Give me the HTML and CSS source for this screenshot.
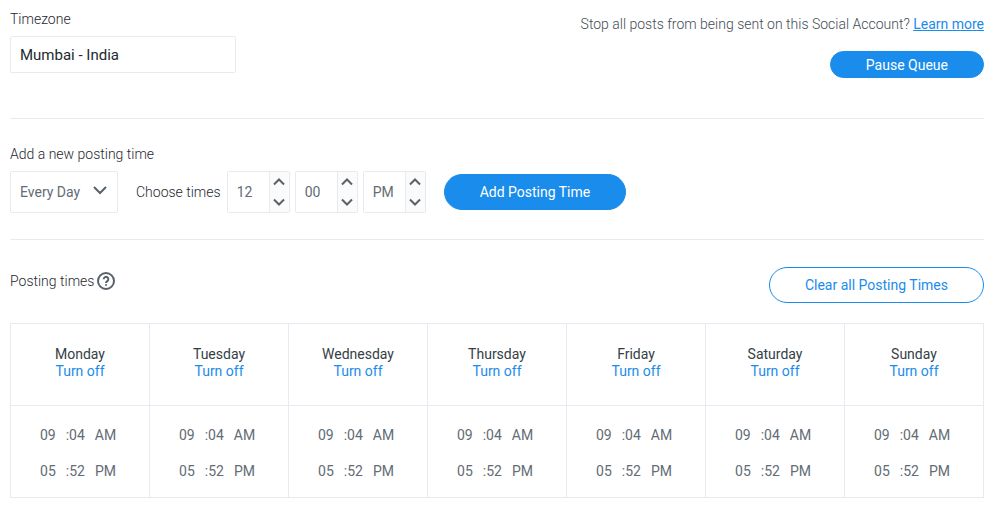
FILE: index.html
```html
<!DOCTYPE html>
<html lang="en">
<head>
    <meta charset="UTF-8">
    <meta name="viewport" content="width=device-width, initial-scale=1.0">
    <title>Posting Schedule</title>
    <link rel="stylesheet" href="styles.css">
</head>
<body>
    <main class="settings">
        <section class="section account">
            <div class="timezone">
                <label class="label" for="timezone">Timezone</label>
                <input type="text" id="timezone" class="timezone-input" value="Mumbai - India">
            </div>
            <div class="pause">
                <p class="pause-text">Stop all posts from being sent on this Social Account? <a href="#">Learn more</a></p>
                <button type="button" class="btn btn-small">Pause Queue</button>
            </div>
        </section>

        <section class="section">
            <label class="label" for="day">Add a new posting time</label>
            <form class="add-form">
                <div class="select-box">
                    <select id="day">
                        <option>Every Day</option>
                        <option>Weekdays</option>
                        <option>Weekends</option>
                    </select>
                    <svg class="select-arrow" width="16" height="10" viewBox="0 0 16 10"><path d="M2 2l6 6 6-6"/></svg>
                </div>
                <div class="choose">
                    <label for="hour">Choose times</label>
                    <div class="spinners">
                        <div class="spinner">
                            <input type="text" id="hour" value="12" data-min="1" data-max="12">
                            <div class="arrows">
                                <button type="button" data-step="1" aria-label="Hour up"><svg width="12" height="8" viewBox="0 0 12 8"><path d="M1 6.5l5-5 5 5"/></svg></button>
                                <button type="button" data-step="-1" aria-label="Hour down"><svg width="12" height="8" viewBox="0 0 12 8"><path d="M1 1.5l5 5 5-5"/></svg></button>
                            </div>
                        </div>
                        <div class="spinner">
                            <input type="text" id="minute" value="00" aria-label="Minute" data-min="0" data-max="59">
                            <div class="arrows">
                                <button type="button" data-step="1" aria-label="Minute up"><svg width="12" height="8" viewBox="0 0 12 8"><path d="M1 6.5l5-5 5 5"/></svg></button>
                                <button type="button" data-step="-1" aria-label="Minute down"><svg width="12" height="8" viewBox="0 0 12 8"><path d="M1 1.5l5 5 5-5"/></svg></button>
                            </div>
                        </div>
                        <div class="spinner">
                            <input type="text" id="period" value="PM" aria-label="AM or PM">
                            <div class="arrows">
                                <button type="button" data-step="1" aria-label="Period up"><svg width="12" height="8" viewBox="0 0 12 8"><path d="M1 6.5l5-5 5 5"/></svg></button>
                                <button type="button" data-step="-1" aria-label="Period down"><svg width="12" height="8" viewBox="0 0 12 8"><path d="M1 1.5l5 5 5-5"/></svg></button>
                            </div>
                        </div>
                    </div>
                </div>
                <button type="button" class="btn">Add Posting Time</button>
            </form>
        </section>

        <section class="section">
            <div class="times-head">
                <h2 class="times-title">Posting times
                    <svg class="help" width="20" height="20" viewBox="0 0 20 20">
                        <circle cx="10" cy="10" r="8"/>
                        <path d="M7.7 8.2a2.3 2.3 0 1 1 3.6 1.9c-.8.6-1.3 1-1.3 1.8"/>
                        <path d="M10 13.3v1.5"/>
                    </svg>
                </h2>
                <button type="button" class="btn btn-outline">Clear all Posting Times</button>
            </div>
            <table class="schedule">
                <thead>
                    <tr>
                        <th scope="col">Monday<button type="button" class="turn-off">Turn off</button></th>
                        <th scope="col">Tuesday<button type="button" class="turn-off">Turn off</button></th>
                        <th scope="col">Wednesday<button type="button" class="turn-off">Turn off</button></th>
                        <th scope="col">Thursday<button type="button" class="turn-off">Turn off</button></th>
                        <th scope="col">Friday<button type="button" class="turn-off">Turn off</button></th>
                        <th scope="col">Saturday<button type="button" class="turn-off">Turn off</button></th>
                        <th scope="col">Sunday<button type="button" class="turn-off">Turn off</button></th>
                    </tr>
                </thead>
                <tbody>
                    <tr>
                        <td><div class="time"><span>09</span><span>:04</span><span>AM</span></div><div class="time"><span>05</span><span>:52</span><span>PM</span></div></td>
                        <td><div class="time"><span>09</span><span>:04</span><span>AM</span></div><div class="time"><span>05</span><span>:52</span><span>PM</span></div></td>
                        <td><div class="time"><span>09</span><span>:04</span><span>AM</span></div><div class="time"><span>05</span><span>:52</span><span>PM</span></div></td>
                        <td><div class="time"><span>09</span><span>:04</span><span>AM</span></div><div class="time"><span>05</span><span>:52</span><span>PM</span></div></td>
                        <td><div class="time"><span>09</span><span>:04</span><span>AM</span></div><div class="time"><span>05</span><span>:52</span><span>PM</span></div></td>
                        <td><div class="time"><span>09</span><span>:04</span><span>AM</span></div><div class="time"><span>05</span><span>:52</span><span>PM</span></div></td>
                        <td><div class="time"><span>09</span><span>:04</span><span>AM</span></div><div class="time"><span>05</span><span>:52</span><span>PM</span></div></td>
                    </tr>
                </tbody>
            </table>
        </section>
    </main>

    <script>
        // Step the hour, minute and AM/PM boxes
        document.querySelectorAll('.arrows button').forEach(function(button) {
            button.addEventListener('click', function() {
                const input = button.closest('.spinner').querySelector('input');
                if (input.id === 'period') {
                    input.value = input.value === 'PM' ? 'AM' : 'PM';
                    return;
                }
                const min = Number(input.dataset.min);
                const max = Number(input.dataset.max);
                let value = Number(input.value) + Number(button.dataset.step);
                if (value > max) value = min;
                if (value < min) value = max;
                input.value = String(value).padStart(2, '0');
            });
        });
    </script>
</body>
</html>
```

FILE: styles.css
```css
* {
    box-sizing: border-box;
}
body {
    font-family: Roboto, sans-serif;
    font-size: 14px;
    line-height: 18px;
    color: #343e47;
    background-color: #fff;
    margin: 0;
}
input, select, button {
    font-family: inherit;
    font-size: 14px;
    color: inherit;
}
button {
    cursor: pointer;
}
svg {
    display: block;
    fill: none;
    stroke: #59626a;
    stroke-width: 2;
}
label {
    font-weight: 300;
    color: #1f2830;
}
.settings {
    padding: 0 16px 0 10px;
}
.section {
    padding: 26px 0;
    border-bottom: 1px solid #e6ebf1;
}
.section:last-child {
    border-bottom: none;
    padding: 27px 0 0;
}
.label {
    display: block;
    margin-bottom: 8px;
}

/* Timezone and pause */
.account {
    display: flex;
    justify-content: space-between;
    padding: 10px 0 40px;
}
.timezone-input {
    display: block;
    width: 226px;
    height: 37px;
    padding: 0 9px;
    font-size: 15px;
    color: #23292e;
    border: 1px solid #e6ebf1;
    border-radius: 2px;
}
.pause {
    display: flex;
    flex-direction: column;
    align-items: flex-end;
    gap: 18px;
    padding-top: 5px;
}
.pause-text {
    margin: 0;
    color: #434c55;
    font-weight: 300;
}
a {
    color: #1a8ceb;
    font-weight: 400;
}
.btn {
    height: 36px;
    padding: 0 35px;
    border: 1px solid #1a8ceb;
    border-radius: 18px;
    background-color: #1a8ceb;
    color: #fff;
}
.btn-small {
    height: 27px;
}
.btn-outline {
    background-color: #fff;
    color: #1a8ceb;
}

/* Add posting time */
.add-form {
    display: flex;
    align-items: center;
    gap: 18px;
}
.select-box {
    position: relative;
}
.select-box select {
    appearance: none;
    display: block;
    width: 108px;
    height: 42px;
    padding: 0 9px;
    background-color: #fff;
    color: #636c75;
    border: 1px solid #e6ebf1;
    border-radius: 2px;
}
.select-arrow {
    position: absolute;
    right: 10px;
    top: 14px;
    pointer-events: none;
}
.choose {
    display: flex;
    align-items: center;
    gap: 6px;
}
.spinners {
    display: flex;
    gap: 5px;
}
.spinner {
    display: flex;
    width: 63px;
    height: 42px;
    border: 1px solid #e6ebf1;
    border-radius: 2px;
}
.spinner input {
    flex: 1;
    min-width: 0;
    padding: 0 0 0 9px;
    border: none;
    color: #636c75;
}
.arrows {
    display: flex;
    flex-direction: column;
    width: 20px;
    background-color: #fbfbfc;
    border-left: 1px solid #e6ebf1;
}
.arrows button {
    flex: 1;
    display: flex;
    align-items: center;
    justify-content: center;
    padding: 0;
    border: none;
    background: none;
}

/* Posting times */
.times-head {
    display: flex;
    justify-content: space-between;
    align-items: flex-start;
    margin-bottom: 20px;
}
.times-title {
    display: flex;
    align-items: center;
    gap: 2px;
    margin: 0;
    font-size: 14px;
    font-weight: 300;
    line-height: 28px;
    color: #1f2830;
}
.schedule {
    width: 100%;
    table-layout: fixed;
    border-collapse: collapse;
}
.schedule th, .schedule td {
    border: 1px solid #e6ebf1;
    text-align: center;
}
.schedule th {
    height: 82px;
    padding: 0 0 4px;
    font-weight: 400;
    line-height: 17px;
}
.turn-off {
    display: block;
    margin: 0 auto;
    padding: 0;
    border: none;
    background: none;
    color: #1a8ceb;
    line-height: 17px;
}
.schedule td {
    padding: 11px 4px 8px 0;
    color: #636c75;
}
.time {
    display: flex;
    justify-content: center;
    gap: 10px;
    line-height: 36px;
}
```
